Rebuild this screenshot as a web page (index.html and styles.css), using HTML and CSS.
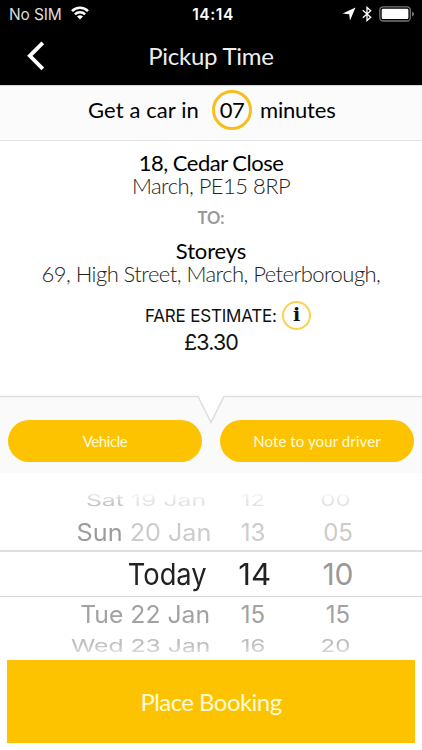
FILE: index.html
```html
<!DOCTYPE html>
<html lang="en">
<head>
<meta charset="utf-8">
<title>Pickup Time</title>
<link rel="stylesheet" href="styles.css">
</head>
<body>
<header class="header">
  <div class="status">
    <div class="status-left">
      <span class="carrier">No SIM</span>
      <svg class="wifi" width="18" height="14" viewBox="0 0 18 14"><g fill="none" stroke="#fff" stroke-width="2.5"><path d="M1 5.1a11.5 11.5 0 0 1 16 0"/><path d="M3.9 8.3a7.3 7.3 0 0 1 10.2 0"/></g><path d="M9 13.6 6 10.6a4.3 4.3 0 0 1 6 0z" fill="#fff"/></svg>
    </div>
    <span class="clock">14:14</span>
    <div class="status-right">
      <svg class="location" width="14" height="14" viewBox="0 0 14 14"><path d="M13.5.6 8 13.4 7.2 7.2.6 6.4z" fill="#fff"/></svg>
      <svg class="bluetooth" width="10" height="16" viewBox="0 0 10 16"><path d="M.8 4.3 8.7 11.2 5 14.6V1.4l3.7 3.4L.8 11.7" fill="none" stroke="#fff" stroke-width="1.3"/></svg>
      <svg class="battery" width="36" height="16" viewBox="0 0 36 16"><rect x=".8" y=".8" width="30.5" height="14.2" rx="3.5" fill="none" stroke="#777" stroke-width="1.3"/><rect x="2.7" y="2.8" width="26.7" height="10.3" rx="1.3" fill="#fff"/><path d="M33 5.6q2 .6 2 2.4t-2 2.4z" fill="#777"/></svg>
    </div>
  </div>
  <div class="navbar">
    <svg class="back" width="18" height="30" viewBox="0 0 18 30"><path d="M15.8 1.8 2.8 14.8l13 13" fill="none" stroke="#fff" stroke-width="3.8"/></svg>
    <h1 class="title">Pickup Time</h1>
  </div>
</header>
<section class="eta">
  <span class="eta-lead">Get a car in</span>
  <span class="eta-badge">07</span>
  <span class="eta-unit">minutes</span>
</section>
<section class="journey">
  <div class="line place from">18, Cedar Close</div>
  <div class="line address">March, PE15 8RP</div>
  <div class="to">TO:</div>
  <div class="line place">Storeys</div>
  <div class="line address">69, High Street, March, Peterborough,</div>
  <div class="fare"><span class="fare-label">FARE ESTIMATE:</span><span class="info">i</span></div>
  <div class="price">£3.30</div>
</section>
<section class="options">
  <svg class="notch" width="422" height="30" viewBox="0 0 422 30"><path d="M0 0h422v1.5H224L211 27.5 198 1.5H0z" fill="#fff"/><path d="M0 1.5h198l13 26 13-26h198" fill="none" stroke="#dedede" stroke-width="1.6"/></svg>
  <button class="pill"><span class="vehicle">Vehicle</span></button>
  <button class="pill"><span class="note">Note to your driver</span></button>
</section>
<section class="picker">
  <div class="row r1"><span class="date"><b>Sat</b> 19 Jan</span><span class="hour">12</span><span class="minute">00</span></div>
  <div class="row r2"><span class="date"><b>Sun</b> 20 Jan</span><span class="hour">13</span><span class="minute">05</span></div>
  <div class="row r3"><span class="date">Today</span><span class="hour">14</span><span class="minute">10</span></div>
  <div class="row r4"><span class="date">Tue 22 Jan</span><span class="hour">15</span><span class="minute">15</span></div>
  <div class="row r5"><span class="date">Wed 23 Jan</span><span class="hour">16</span><span class="minute">20</span></div>
</section>
<button class="book"><span>Place Booking</span></button>
</body>
</html>
```
FILE: styles.css
```css
* { box-sizing: border-box; }
body { margin: 0; width: 422px; height: 750px; overflow: hidden; background: #fff; color: #111; font-family: Lato, sans-serif; }
svg { display: block; flex: none; }
button { border: 0; padding: 0; font-family: Lato, sans-serif; color: #fffbd8; background: #fdc300; }
span { white-space: nowrap; }

.header { height: 85px; background: #000; color: #fff; }
.status { display: grid; grid-template-columns: 1fr auto 1fr; height: 28px; align-items: center; padding: 0 7px 0 9px; font-family: Inter, sans-serif; }
.status-left, .status-right { display: flex; align-items: center; }
.status-right { justify-content: flex-end; }
.carrier { font-size: 15.5px; letter-spacing: -.15px; color: #ddd; }
.wifi { margin-left: 9px; margin-top: -2px; }
.clock { font-size: 15.5px; font-weight: 600; letter-spacing: .6px; margin-left: 2px; }
.location { margin-right: 6px; }
.bluetooth { margin-right: 7px; }
.navbar { display: grid; grid-template-columns: 60px 1fr 60px; height: 56px; align-items: center; }
.back { margin-left: 27px; }
.title { margin: 0; text-align: center; font-size: 24px; line-height: 30px; font-weight: 400; color: #eee; letter-spacing: -.25px; }

.eta { display: flex; height: 56px; align-items: center; padding: 0 0 7px 88px; border-top: 1px solid #d4d4d4; border-bottom: 1px solid #e4e4e4; background: #fbfbfb; font-size: 22px; line-height: 28px; color: #000; }
.eta-lead { width: 124px; letter-spacing: .1px; }
.eta-badge { width: 40px; height: 40px; border: 3px solid #f7be22; border-radius: 50%; text-align: center; line-height: 34px; letter-spacing: -.6px; }
.eta-unit { margin-left: 8px; letter-spacing: -.2px; }

.journey { height: 255px; padding-top: 10px; text-align: center; }
.line { height: 23px; line-height: 23px; font-size: 22px; white-space: nowrap; }
.place { color: #000; letter-spacing: -.15px; }
.from { letter-spacing: -.5px; }
.address { font-weight: 300; color: #222; letter-spacing: -.55px; }
.to { height: 20px; line-height: 20px; margin: 11px 0; font-size: 16.5px; font-weight: 700; color: #999; }
.fare { display: flex; height: 30px; margin-top: 15px; padding-left: 145px; align-items: center; font-family: Inter, sans-serif; font-size: 17px; letter-spacing: -.2px; }
.fare-label { width: 137px; text-align: left; padding-top: 2px; }
.info { width: 29px; height: 29px; border: 2.5px solid #fbd350; border-radius: 50%; font: 700 19px/22px "DejaVu Serif", serif; color: #111; }
.price { margin-top: -1px; height: 26px; font: 400 21.5px/26px Inter, sans-serif; letter-spacing: -.9px; }

.options { position: relative; display: flex; height: 77px; padding: 24px 8px 0; gap: 18px; background: #fafafa; }
.notch { position: absolute; left: 0; top: -1px; }
.pill { position: relative; flex: 1; height: 42px; border-radius: 21px; font-size: 15px; }
.vehicle { letter-spacing: -.4px; }
.note { letter-spacing: .1px; }

.picker { height: 187px; padding-top: 14px; font-family: Inter, sans-serif; color: #999; }
.row { display: grid; grid-template-columns: 211px 84px 86px; align-items: center; }
.row b { font-weight: 400; }
.row span { font-size: 24px; line-height: 1; }
.date { justify-self: end; transform-origin: right center; }
.hour, .minute { justify-self: center; }
.r1 { height: 27px; color: #e3e3e3; -webkit-mask-image: linear-gradient(transparent 10%, #000 60%); mask-image: linear-gradient(transparent 10%, #000 60%); }
.r1 b { color: #c6c6c6; }
.r1 span { transform: scaleY(.68); }
.r1 .date { margin-right: 5px; transform: scale(1.035, .68); }
.r1 .minute, .r5 .minute { margin-right: 5px; }
.r2 { height: 36px; padding-top: 2px; color: #ccc; }
.r2 b { color: #9c9c9c; }
.r2 .date { transform: scaleX(1.05); }
.r3 { height: 47px; border-top: 2px solid #dfdfdf; border-bottom: 1px solid #d6d6d6; }
.r3 span { font-size: 30px; }
.r3 .date, .r3 .hour { color: #222; }
.r3 .date { margin-right: 4px; transform: scaleX(.91); }
.r3 .hour { margin-left: 4px; transform: scaleX(1.04); }
.r4 { height: 35px; color: #a2a2a2; }
.r4 .date { margin-right: 1px; transform: scaleX(1.03); }
.r5 { height: 27px; color: #bdbdbd; -webkit-mask-image: linear-gradient(#000 45%, rgba(0, 0, 0, .35) 90%); mask-image: linear-gradient(#000 45%, rgba(0, 0, 0, .35) 90%); }
.r5 span { transform: scaleY(.72); }
.r5 .date { margin-right: 1px; transform: scale(1.03, .72); }

.book { display: block; width: 408px; height: 83px; margin-left: 7px; font-size: 24px; letter-spacing: -.55px; }
```
